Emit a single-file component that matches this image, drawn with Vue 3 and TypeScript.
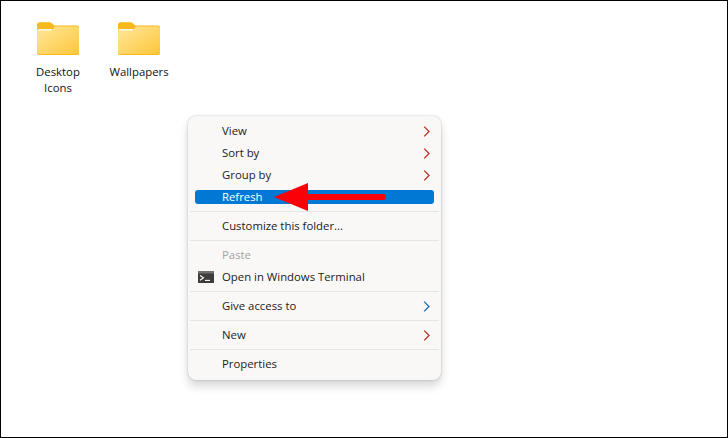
<script setup lang="ts">
type Row = { label: string; sub?: 'red' | 'blue'; disabled?: boolean; active?: boolean; terminal?: boolean }
const sections: Row[][] = [
  [
    { label: 'View', sub: 'red' },
    { label: 'Sort by', sub: 'red' },
    { label: 'Group by', sub: 'red' },
    { label: 'Refresh', active: true },
  ],
  [{ label: 'Customize this folder...' }],
  [{ label: 'Paste', disabled: true }, { label: 'Open in Windows Terminal', terminal: true }],
  [{ label: 'Give access to', sub: 'blue' }],
  [{ label: 'New', sub: 'red' }],
  [{ label: 'Properties' }],
]
const folders = [
  { id: 'a', lines: ['Desktop', 'Icons'] },
  { id: 'b', lines: ['Wallpapers'] },
]
</script>

<template>
  <div class="desktop">
    <div class="icons">
      <div v-for="f in folders" :key="f.id" class="icon">
        <svg class="folder" width="44" height="36" viewBox="0 0 44 36">
          <defs>
            <linearGradient :id="'g' + f.id" x1="0.1" y1="0.25" x2="0.9" y2="1">
              <stop offset="0" stop-color="#ffe28c" />
              <stop offset="1" stop-color="#fdc83e" />
            </linearGradient>
          </defs>
          <path d="M1 5C1 3.2 2 2.2 4 2.2h9c1.6 0 2.5.6 3.6 1.7L19 6.5H1z" fill="#f9b916" />
          <rect x="1" y="5.5" width="42" height="29.5" rx="2" fill="#f7b91f" />
          <path d="M1 9.5 16.5 9.5 19 6.6H41c1.2 0 2 .8 2 2V32c0 1.2-.8 2-2 2H3c-1.2 0-2-.8-2-2z" :fill="'url(#g' + f.id + ')'" />
          <rect x="2" y="9" width="14" height="1.6" fill="#f7f3e6" />
        </svg>
        <div class="name">
          <div v-for="l in f.lines" :key="l">{{ l }}</div>
        </div>
      </div>
    </div>

    <div class="menu">
      <template v-for="(section, i) in sections" :key="i">
        <div v-if="i > 0" class="sep"></div>
        <div class="section">
          <div
            v-for="r in section"
            :key="r.label"
            class="row"
            :class="{ active: r.active, disabled: r.disabled }"
          >
            <svg v-if="r.terminal" class="term" width="16" height="12" viewBox="0 0 16 12">
              <rect width="16" height="12" rx="0.5" fill="#3d3d3d" />
              <rect width="16" height="2.5" fill="#707070" />
              <path d="M2 4.5 5.5 6.8 2 9.2" fill="none" stroke="#fff" stroke-width="1.1" />
              <path d="M7 9.4h5" stroke="#fff" stroke-width="1.1" />
            </svg>
            <span class="label">{{ r.label }}</span>
            <svg v-if="r.sub" class="chev" width="8" height="11" viewBox="0 0 8 11">
              <path
                :d="r.sub === 'red' ? 'M1.9.7 6.7 5.5 1.9 10.3' : 'M.5.7 5.3 5.5.5 10.3'"
                fill="none"
                :stroke="r.sub === 'red' ? '#7cc6ee' : '#e8a878'"
                stroke-opacity="0.4"
                stroke-width="1"
              />
              <path
                d="M1.2.7 6 5.5 1.2 10.3"
                fill="none"
                :stroke="r.sub === 'red' ? '#b82a1e' : '#1268b8'"
                stroke-width="1.2"
              />
            </svg>
          </div>
        </div>
      </template>
    </div>

    <svg class="arrow" width="113" height="30" viewBox="0 0 113 30">
      <path d="M0 15 34 1V12H109a3 3 0 0 1 0 6H34V29z" fill="#fb0007" />
    </svg>
  </div>
</template>

<style scoped>
.desktop {
  position: relative;
  box-sizing: border-box;
  width: 728px;
  height: 438px;
  background: #fff;
  border: 1px solid #000;
  overflow: hidden;
  font-family: "Open Sans", "Noto Sans", sans-serif;
  font-size: 11.35px;
  color: #1b1b1b;
}
.icons {
  display: flex;
  gap: 1px;
  padding: 19px 0 0 17px;
}
.icon {
  width: 80px;
  display: flex;
  flex-direction: column;
  align-items: center;
}
.folder {
  display: block;
}
.name {
  margin-top: 8px;
  text-align: center;
  line-height: 15.5px;
  color: #111;
}
.menu {
  position: absolute;
  left: 187px;
  top: 115px;
  box-sizing: border-box;
  width: 253px;
  height: 264px;
  padding: 4px 2px 4px;
  background: #f9f8f7;
  border-radius: 8px;
  box-shadow: 0 0 2px rgba(0, 0, 0, 0.25), 0 6px 10px rgba(0, 0, 0, 0.16);
}
.section {
  display: flex;
  flex-direction: column;
}
.sep {
  height: 1px;
  margin: 3px 0;
  background: #e6e5e4;
}
.row {
  position: relative;
  height: 22px;
  display: flex;
  align-items: center;
  padding-left: 32px;
}
.row.active {
  height: 14px;
  margin: 4px 5px 4px;
  padding-left: 27px;
  background: #0078d4;
  border-radius: 3px;
  color: #fff;
}
.row.disabled {
  color: #a3a3a3;
}
.label {
  white-space: nowrap;
  margin-bottom: 2px;
}
.term {
  position: absolute;
  left: 8px;
  top: 5px;
}
.chev {
  position: absolute;
  right: 8px;
  top: 6px;
}
.arrow {
  position: absolute;
  left: 273px;
  top: 181px;
}
</style>
